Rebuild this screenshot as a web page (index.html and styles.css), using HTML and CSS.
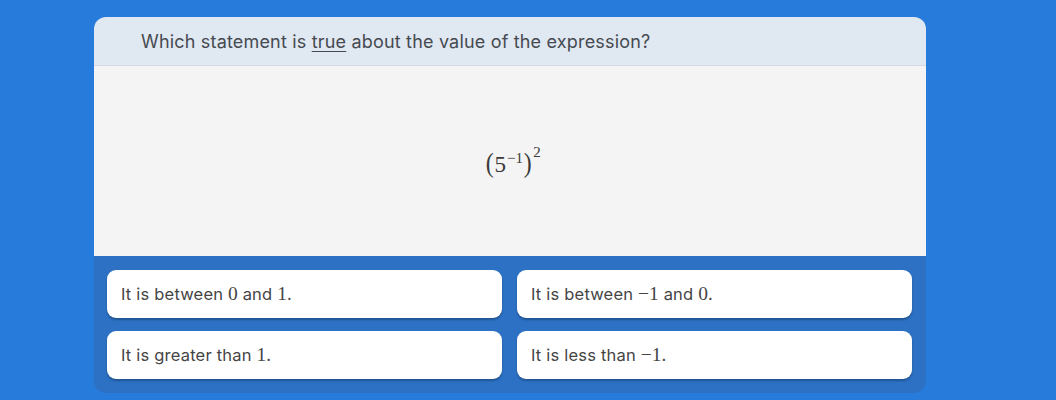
FILE: index.html
```html
<!DOCTYPE html>
<html>
<head>
<meta charset="utf-8">
<link rel="stylesheet" href="styles.css">
</head>
<body>
<div class="card">
  <div class="header">Which statement is <u>true</u> about the value of the expression?</div>
  <div class="content">
    <span class="math"><span class="paren">(</span>5<sup class="sup1">−1</sup><span class="paren">)</span><sup class="sup2">2</sup></span>
  </div>
  <div class="answers">
    <div class="btn"><span>It is between <span class="m">0</span> and <span class="m">1</span>.</span></div>
    <div class="btn"><span>It is between <span class="m">−1</span> and <span class="m">0</span>.</span></div>
    <div class="btn"><span>It is greater than <span class="m">1</span>.</span></div>
    <div class="btn"><span>It is less than <span class="m">−1</span>.</span></div>
  </div>
</div>
</body>
</html>
```

FILE: styles.css
```css
html, body {
  margin: 0;
  padding: 0;
}
body {
  background: #277bdb;
  width: 1056px;
  height: 400px;
  overflow: hidden;
  font-family: "Inter", "Noto Sans", sans-serif;
}
.card {
  margin: 17px 0 0 94px;
  width: 832px;
  border-radius: 12px;
  overflow: hidden;
}
.header {
  height: 49px;
  box-sizing: border-box;
  background: #e0e8f2;
  border-bottom: 1px solid #d3d9e0;
  padding: 14px 0 0 47px;
  font-size: 18px;
  letter-spacing: 0.18px;
  color: #464a50;
}
.header u {
  text-underline-offset: 3px;
}
.content {
  height: 190px;
  background: #f4f4f4;
  display: flex;
  align-items: center;
  justify-content: center;
}
.math {
  font-family: "Liberation Serif", serif;
  font-size: 23px;
  color: #3a3a3a;
  margin: 4px 0 0 6px;
}
.paren {
  font-size: 28px;
  display: inline-block;
  transform: scaleX(0.85);
}
.math sup {
  font-size: 15px;
  vertical-align: 0;
  position: relative;
}
.sup1 { top: -9px; margin-left: 1px; }
.sup2 { top: -15px; margin-left: 1px; }
.answers {
  background: #2c71c4;
  padding: 14px 14px 14px 13px;
  display: grid;
  grid-template-columns: 395px 395px;
  column-gap: 15px;
  row-gap: 13px;
  border-radius: 0 0 10px 10px;
}
.btn {
  height: 48px;
  box-sizing: border-box;
  background: #fff;
  border-radius: 9px;
  box-shadow: 0 2px 2px rgba(0, 0, 0, 0.25);
  padding: 0 0 0 14px;
  display: flex;
  align-items: center;
  font-size: 16.5px;
  letter-spacing: 0.2px;
  color: #454545;
}
.m {
  font-family: "Liberation Serif", serif;
  font-size: 19.5px;
  letter-spacing: 0;
}
```
